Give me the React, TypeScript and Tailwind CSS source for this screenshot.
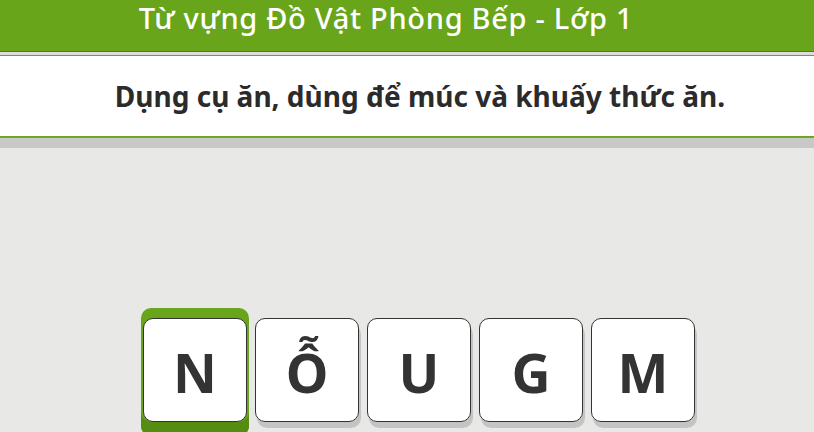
import React from "react";

const letters = ["N", "Ỗ", "U", "G", "M"];

export default function App() {
  return (
    <div
      className="w-[814px] h-[432px] overflow-hidden bg-[#e8e8e7] flex flex-col"
      style={{ fontFamily: '"Noto Sans", "Open Sans", sans-serif' }}
    >
      <div className="h-[52px] shrink-0 bg-[#68a51a] flex items-start justify-center pr-[42px] border-b border-[#4f7f14]">
        <h1 className="text-white text-[29px] leading-[34px] font-medium tracking-[0.7px] pt-[1px]">
          Từ vựng Đồ Vật Phòng Bếp - Lớp 1
        </h1>
      </div>
      <div className="h-[3px] shrink-0 bg-[#dcdcdc]" />
      <div className="h-[82px] shrink-0 bg-white border-t border-[#68a51a] border-b border-b-[#68a51a] flex items-start justify-center pl-[26px] pt-[26px]">
        <p className="text-[#2b2b2b] text-[28px] font-bold leading-none">
          Dụng cụ ăn, dùng để múc và khuấy thức ăn.
        </p>
      </div>
      <div className="h-px shrink-0 bg-[#8a8a8a]" />
      <div className="h-[10px] shrink-0 bg-[#c8c8c8]" />
      <div className="flex-1 flex justify-center items-start pl-[24px] pt-[170px] gap-[8px]">
        {letters.map((l, i) =>
          i === 0 ? (
            <div
              key={l}
              className="-mt-[10px] -mx-[2px] px-[2px] pt-[10px] pb-[14px] rounded-[10px] bg-[#68a51a] shadow-[inset_0_-14px_0_#558c12]"
            >
              <Tile letter={l} />
            </div>
          ) : (
            <div key={l} className="shadow-[2px_6px_0_#c4c4c4] rounded-[10px]">
              <Tile letter={l} />
            </div>
          )
        )}
      </div>
    </div>
  );
}

function Tile({ letter }: { letter: string }) {
  return (
    <div className="w-[104px] h-[104px] bg-white border border-[#333] rounded-[10px] flex items-center justify-center">
      <span className="text-[#333] text-[54px] font-bold leading-none mt-[4px]">{letter}</span>
    </div>
  );
}
